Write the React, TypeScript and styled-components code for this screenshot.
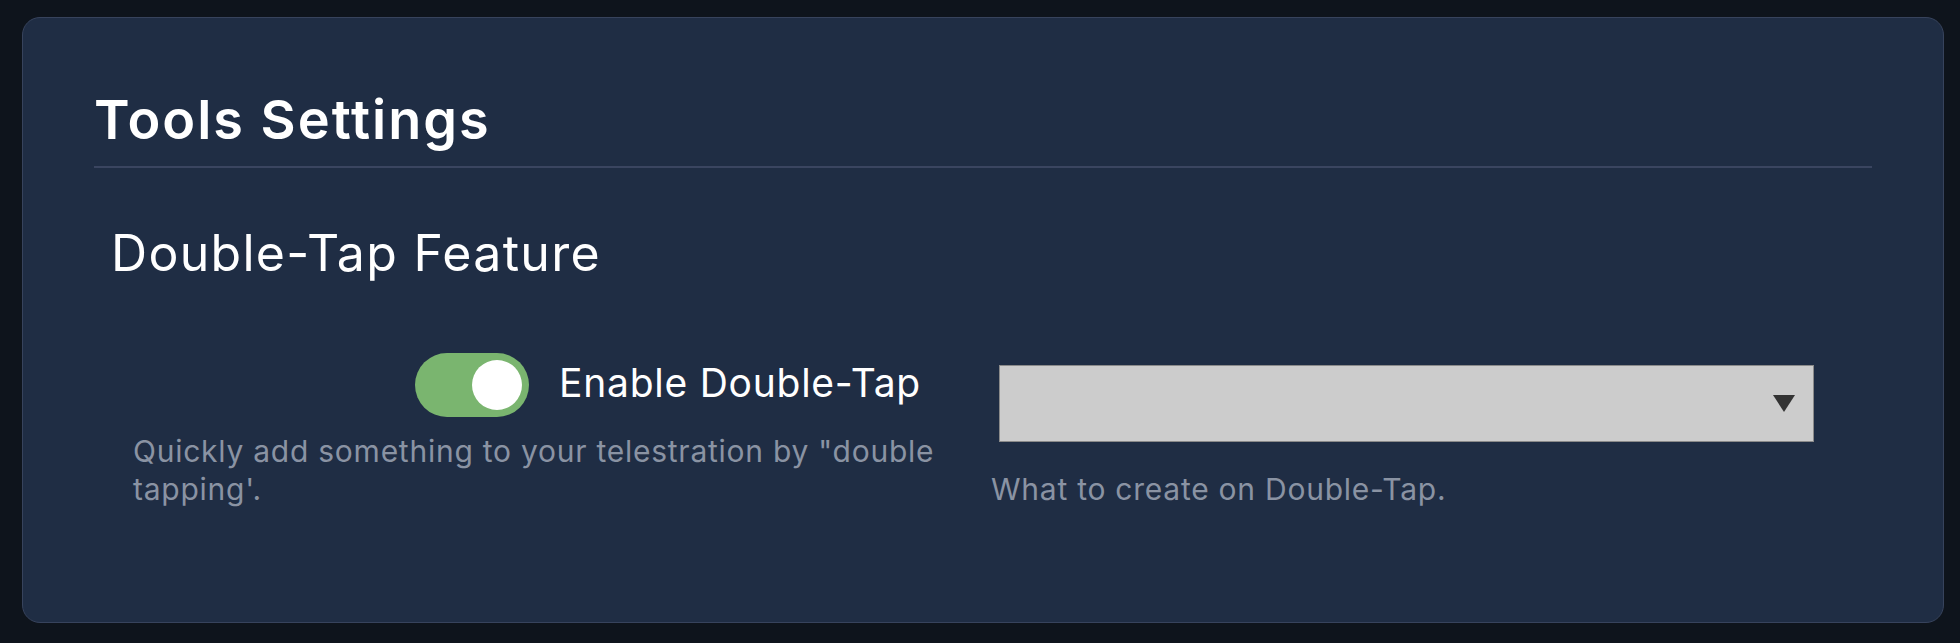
import React, { useState } from "react";
import styled, { createGlobalStyle } from "styled-components";

const GlobalStyle = createGlobalStyle`
  html, body {
    margin: 0;
    padding: 0;
    background: #0e141c;
  }
  body {
    font-family: Inter, "Noto Sans", "Liberation Sans", sans-serif;
    color: #ffffff;
  }
  * { box-sizing: border-box; }
`;

const Page = styled.div`
  padding: 17px 16px 20px 22px;
`;

const Card = styled.section`
  width: 1922px;
  min-height: 606px;
  background: #1f2d44;
  border: 1px solid #37435c;
  border-radius: 18px;
  padding: 75px 71px 0 71px;
`;

const Header = styled.header`
  padding-bottom: 19px;
  border-bottom: 2px solid #3a4560;
`;

const Title = styled.h1`
  margin: 0;
  font-size: 54px;
  line-height: 1;
  font-weight: 600;
  letter-spacing: 2px;
`;

const Section = styled.div`
  padding: 60px 0 0 17px;
`;

const SectionTitle = styled.h2`
  margin: 0;
  font-size: 50px;
  line-height: 1;
  font-weight: 400;
  letter-spacing: 1.3px;
`;

const Row = styled.div`
  display: grid;
  grid-template-columns: 826px 1fr;
  column-gap: 32px;
  margin-top: 75px;
  padding-left: 22px;
`;

const Column = styled.div`
  display: flex;
  flex-direction: column;
`;

const ToggleRow = styled.label`
  display: flex;
  align-items: center;
  justify-content: flex-end;
  gap: 30px;
  padding-right: 38px;
  cursor: pointer;
`;

const Track = styled.span<{ $on: boolean }>`
  display: flex;
  align-items: center;
  justify-content: ${(p) => (p.$on ? "flex-end" : "flex-start")};
  width: 114px;
  height: 64px;
  padding: 0 7px;
  border-radius: 32px;
  background: ${(p) => (p.$on ? "#7ab56f" : "#56607a")};
`;

const Thumb = styled.span`
  width: 50px;
  height: 50px;
  border-radius: 50%;
  background: #ffffff;
`;

const ToggleLabel = styled.span`
  font-size: 39px;
  line-height: 1;
  padding-bottom: 5px;
  letter-spacing: 0.75px;
`;

const Help = styled.p<{ $top: number }>`
  margin: ${(p) => p.$top}px 0 0 0;
  font-size: 30px;
  line-height: 38px;
  color: #8a93a3;
  letter-spacing: 0.75px;
`;

const Select = styled.div`
  display: flex;
  align-items: center;
  justify-content: flex-end;
  height: 77px;
  margin: 12px 58px 0 8px;
  padding-right: 18px;
  background: #cccccc;
  border: 1px solid #8a8a8a;
`;

const Arrow = () => (
  <svg width="22" height="17" viewBox="0 0 22 17" aria-hidden="true">
    <polygon points="0,0 22,0 11,17" fill="#333333" />
  </svg>
);

export default function App() {
  const [on, setOn] = useState(true);
  return (
    <>
      <GlobalStyle />
      <Page>
        <Card>
          <Header>
            <Title>Tools Settings</Title>
          </Header>
          <Section>
            <SectionTitle>Double-Tap Feature</SectionTitle>
            <Row>
              <Column>
                <ToggleRow onClick={() => setOn(!on)}>
                  <Track $on={on}>
                    <Thumb />
                  </Track>
                  <ToggleLabel>Enable Double-Tap</ToggleLabel>
                </ToggleRow>
                <Help $top={15}>
                  Quickly add something to your telestration by "double tapping'.
                </Help>
              </Column>
              <Column>
                <Select>
                  <Arrow />
                </Select>
                <Help $top={28}>What to create on Double-Tap.</Help>
              </Column>
            </Row>
          </Section>
        </Card>
      </Page>
    </>
  );
}
